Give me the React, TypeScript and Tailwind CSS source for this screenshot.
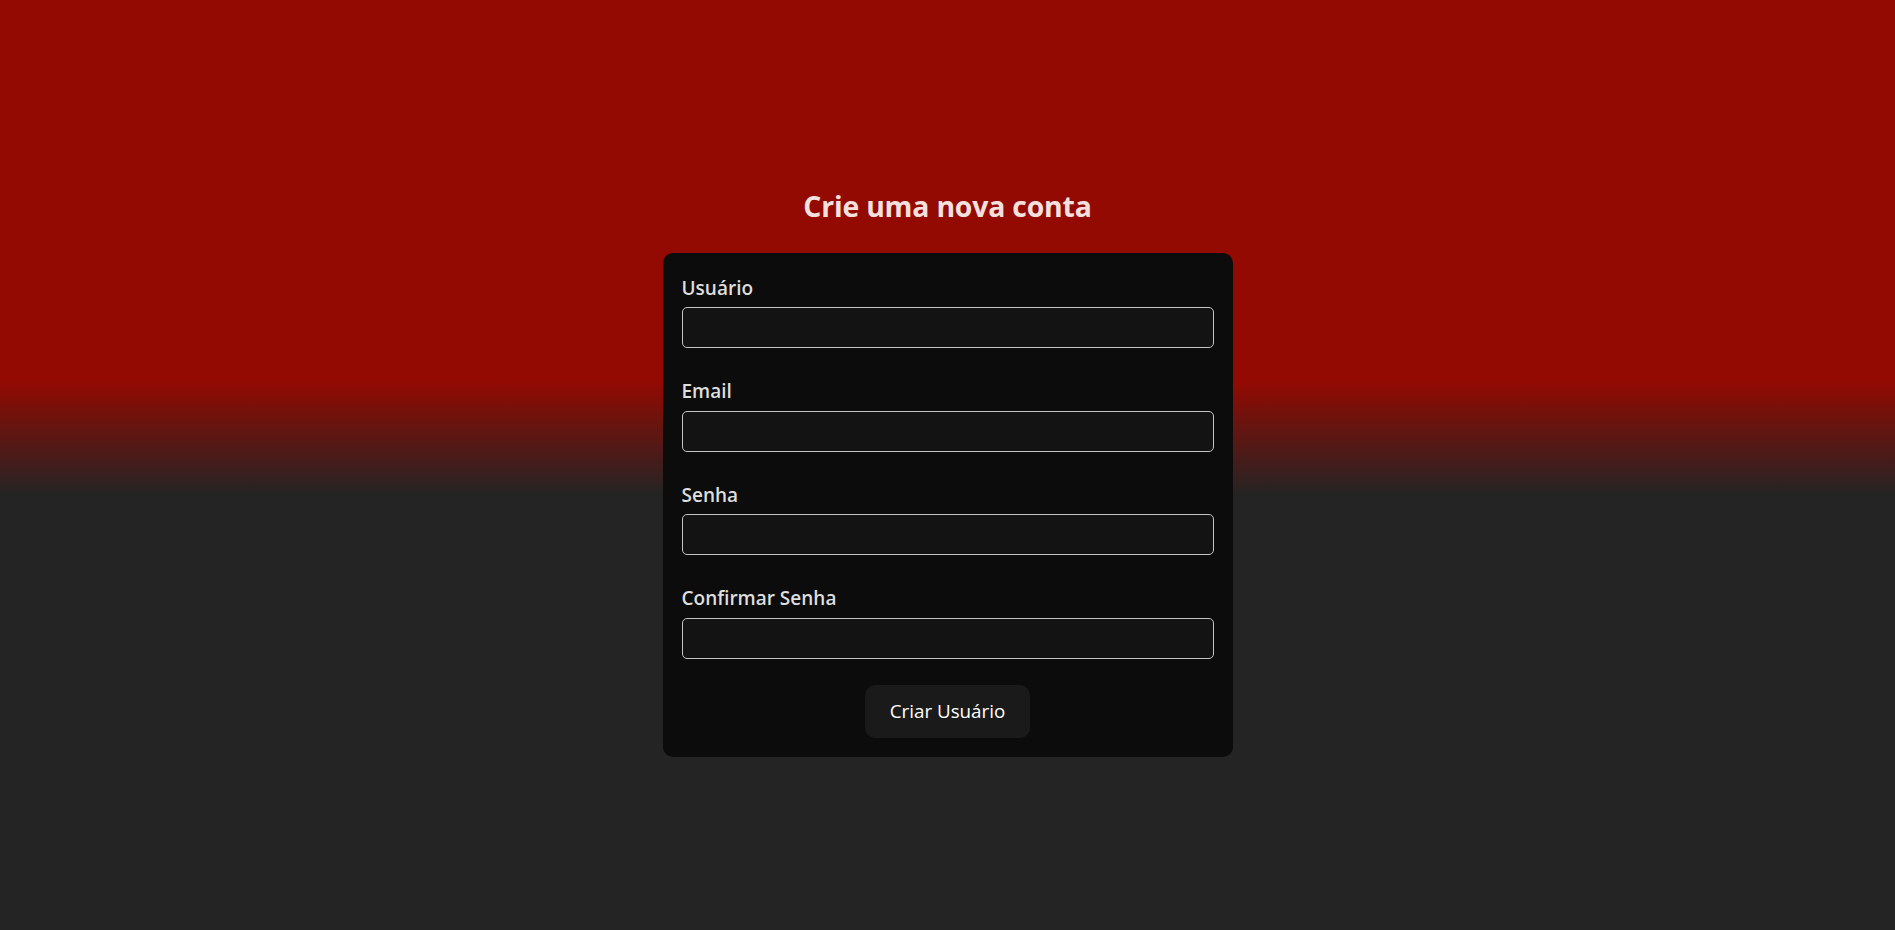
import React from "react";

const fields = ["Usuário", "Email", "Senha", "Confirmar Senha"];

export default function App() {
  return (
    <div
      className="min-h-screen w-full bg-[linear-gradient(180deg,#930a02_0%,#930a02_41%,#242424_53.2%,#242424_100%)] flex flex-col items-center pt-[185px] text-[#dedede]"
      style={{ fontFamily: '"Open Sans", "Noto Sans", sans-serif' }}
    >
      <h2 className="h-[43px] leading-[43px] text-[28.4px] font-bold text-[#f3e0df] mb-[24.6px] tracking-[-0.2px]">
        Crie uma nova conta
      </h2>
      <form
        className="w-[570px] bg-[#0c0c0c] rounded-[10px] p-[19px] flex flex-col"
        onSubmit={(e) => e.preventDefault()}
      >
        {fields.map((f, i) => (
          <div key={f} className={i > 0 ? "mt-[27px] flex flex-col" : "flex flex-col"}>
            <label className="h-[29px] leading-[33px] text-[19px] font-semibold text-[#dedede]">
              {f}
            </label>
            <input
              type={f === "Senha" || f === "Confirmar Senha" ? "password" : f === "Email" ? "email" : "text"}
              className="mt-[6.5px] h-[41px] w-full bg-[#131313] border border-[#c4c4c4] rounded-[5px] outline-none px-2 text-white"
            />
          </div>
        ))}
        <div className="flex justify-center mt-[26px]">
          <button
            type="submit"
            className="h-[53.5px] w-[165px] bg-[#1a1a1a] rounded-[10px] text-[18.8px] text-white font-normal"
          >
            Criar Usuário
          </button>
        </div>
      </form>
    </div>
  );
}
